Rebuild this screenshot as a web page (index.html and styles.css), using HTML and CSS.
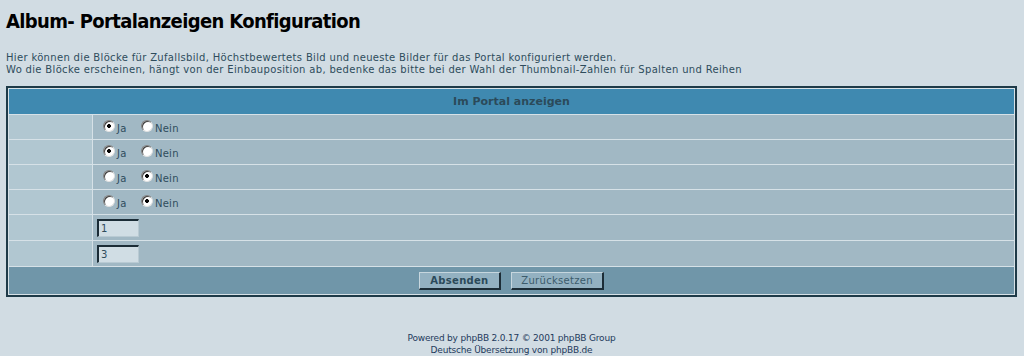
FILE: index.html
```html
<!DOCTYPE html>
<html>
<head>
    <title>Album- Portalanzeigen Konfiguration</title>
    <link rel="stylesheet" href="styles.css">
</head>
<body>
    <h1>Album- Portalanzeigen Konfiguration</h1>

    <p class="explain">Hier können die Blöcke für Zufallsbild, Höchstbewertets Bild und neueste Bilder für das Portal konfiguriert werden.<br>Wo die Blöcke erscheinen, hängt von der Einbauposition ab, bedenke das bitte bei der Wahl der Thumbnail-Zahlen für Spalten und Reihen</p>

    <form action="#" method="post">
        <table class="forumline">
            <tr>
                <th class="thHead" colspan="2">Im Portal anzeigen</th>
            </tr>
            <tr>
                <td class="row1"></td>
                <td class="row2">
                    <input type="radio" name="rand_pic" value="1" checked><span class="gen">Ja</span>
                    <input type="radio" name="rand_pic" value="0"><span class="gen">Nein</span>
                </td>
            </tr>
            <tr>
                <td class="row1"></td>
                <td class="row2">
                    <input type="radio" name="high_pic" value="1" checked><span class="gen">Ja</span>
                    <input type="radio" name="high_pic" value="0"><span class="gen">Nein</span>
                </td>
            </tr>
            <tr>
                <td class="row1"></td>
                <td class="row2">
                    <input type="radio" name="new_pic" value="1"><span class="gen">Ja</span>
                    <input type="radio" name="new_pic" value="0" checked><span class="gen">Nein</span>
                </td>
            </tr>
            <tr>
                <td class="row1"></td>
                <td class="row2">
                    <input type="radio" name="new_list" value="1"><span class="gen">Ja</span>
                    <input type="radio" name="new_list" value="0" checked><span class="gen">Nein</span>
                </td>
            </tr>
            <tr class="tall">
                <td class="row1"></td>
                <td class="row2"><input class="post" type="text" name="cols" value="1"></td>
            </tr>
            <tr class="tall">
                <td class="row1"></td>
                <td class="row2"><input class="post" type="text" name="rows" value="3"></td>
            </tr>
            <tr>
                <td class="catBottom" colspan="2">
                    <input type="submit" class="mainoption" value="Absenden">&nbsp;
                    <input type="reset" class="liteoption" value="Zurücksetzen">
                </td>
            </tr>
        </table>
    </form>

    <div class="copyright">
        Powered by phpBB 2.0.17 &copy; 2001 phpBB Group<br>
        Deutsche Übersetzung von phpBB.de
    </div>
</body>
</html>
```

FILE: styles.css
```css
/* subBlue style admin page */
body {
    margin: 0;
    padding: 10px 7px 0 6px;
    background-color: #d1dce3;
    color: #2e4c5c;
    font-family: "DejaVu Sans", Verdana, sans-serif;
}
h1 {
    margin: 0;
    font-family: "DejaVu Sans Condensed", "DejaVu Sans", sans-serif;
    font-size: 20px;
    font-weight: bold;
    line-height: 23px;
    letter-spacing: -0.65px;
    color: #000;
}
.explain {
    margin: 19px 0 10px 0;
    font-size: 10px;
    line-height: 12px;
    letter-spacing: 0.33px;
    color: #2e4c5c;
}
form {
    margin: 0;
}
.forumline {
    width: 100%;
    border: 2px solid #1e3a48;
    border-spacing: 1px;
    background-color: #d6e1e7;
}
.forumline td, .forumline th {
    padding: 0 4px;
    height: 24px;
}
.forumline tr.tall td {
    height: 25px;
}
.forumline th.thHead {
    height: 25px;
    background-color: #3f89b0;
    color: #2b4a5a;
    font-size: 11px;
    font-weight: bold;
    text-align: center;
}
.row1 {
    width: 75px;
    background-color: #b1c7d1;
}
.row2 {
    background-color: #a1b8c4;
    font-size: 10px;
}
.gen {
    font-size: 10px;
    letter-spacing: 0.3px;
    color: #2e4c5c;
    vertical-align: -3px;
    margin-right: 5px;
}
input[type="radio"] {
    appearance: none;
    -webkit-appearance: none;
    width: 12px;
    height: 12px;
    margin: 0 2px 0 6px;
    border-radius: 50%;
    border: 1px solid #808080;
    border-right-color: #e0e0e0;
    border-bottom-color: #e0e0e0;
    background-color: #fff;
    box-shadow: inset 1px 1px 0 #404040;
    vertical-align: middle;
}
input[type="radio"]:checked {
    background-image: radial-gradient(circle, #000 0, #000 1.6px, transparent 2.2px);
}
.post {
    width: 42px;
    height: 18px;
    box-sizing: border-box;
    margin: 0;
    padding: 0 2px;
    background-color: #d0dde4;
    border-style: solid;
    border-width: 2px 1px 1px 2px;
    border-color: #1b2c36 #b9cad3 #b9cad3 #1b2c36;
    font-family: "DejaVu Sans", Verdana, sans-serif;
    font-size: 10px;
    color: #2e4c5c;
    vertical-align: middle;
}
.forumline td.catBottom {
    height: 27px;
    background-color: #7096a9;
    text-align: center;
}
.mainoption, .liteoption {
    height: 18px;
    box-sizing: border-box;
    padding: 0 6px;
    background-color: #93b1c1;
    border-style: solid;
    border-width: 1px 2px 2px 1px;
    border-color: #c6d6de #1c2d37 #1c2d37 #c6d6de;
    font-family: "DejaVu Sans", Verdana, sans-serif;
    font-size: 10px;
    letter-spacing: 0.3px;
    color: #2b4a5a;
    vertical-align: middle;
}
.mainoption {
    width: 82px;
    font-weight: bold;
}
.liteoption {
    width: 93px;
    color: #3c5c6c;
}
.copyright {
    margin-top: 35px;
    text-align: center;
    font-size: 9px;
    line-height: 12px;
    letter-spacing: -0.2px;
    color: #1e3a5c;
}
```
